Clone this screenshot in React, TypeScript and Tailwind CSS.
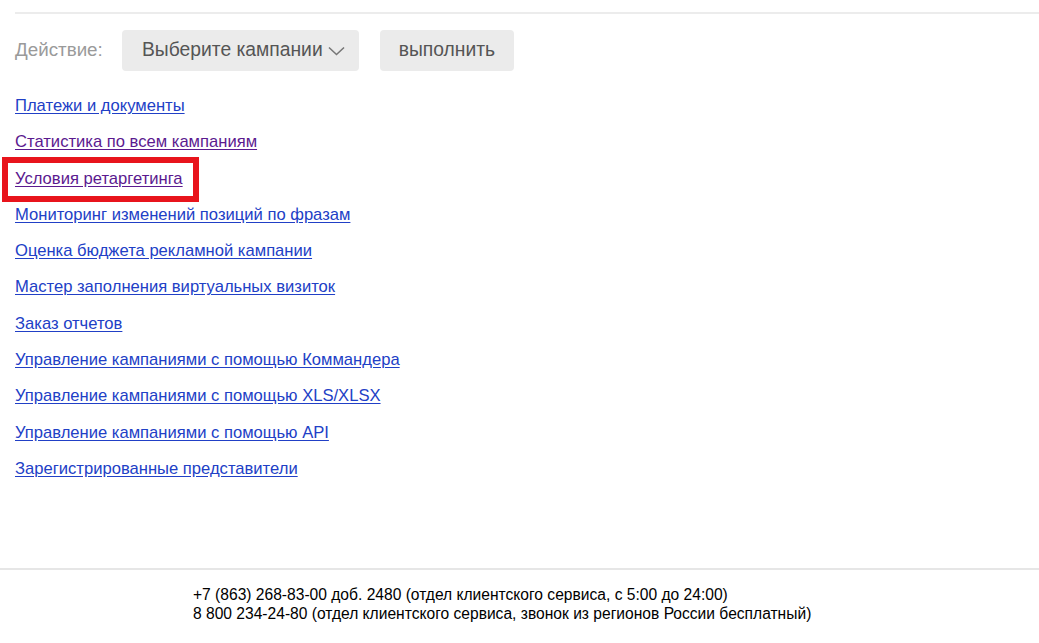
const links = [
  { text: "Платежи и документы", visited: false },
  { text: "Статистика по всем кампаниям", visited: true },
  { text: "Условия ретаргетинга", visited: true, marked: true },
  { text: "Мониторинг изменений позиций по фразам", visited: false },
  { text: "Оценка бюджета рекламной кампании", visited: false },
  { text: "Мастер заполнения виртуальных визиток", visited: false },
  { text: "Заказ отчетов", visited: false },
  { text: "Управление кампаниями с помощью Коммандера", visited: false },
  { text: "Управление кампаниями с помощью XLS/XLSX", visited: false },
  { text: "Управление кампаниями с помощью API", visited: false },
  { text: "Зарегистрированные представители", visited: false },
];

export default function App() {
  return (
    <div className="min-h-screen bg-white font-['Liberation_Sans',Arial,sans-serif]">
      <div className="pl-[15px] pt-[12px]">
        <div className="h-[2px] bg-[#ececec]" />

        <div className="mt-[16px] flex items-center">
          <span className="w-[107px] text-[18.8px] text-[#9a9a9a]">Действие:</span>
          <button className="flex h-[41px] items-center rounded-[4px] bg-[#ebebeb] pl-[20px] pr-[14px] text-[19.3px] text-[#555]">
            Выберите кампании
            <svg className="ml-[5px]" width="17" height="10" viewBox="0 0 17 10" fill="none">
              <polyline points="1,1.5 8.5,8.5 16,1.5" stroke="#777" strokeWidth="1.6" />
            </svg>
          </button>
          <button className="ml-[21px] h-[41px] rounded-[4px] bg-[#ebebeb] px-[19px] text-[19.3px] text-[#555]">
            выполнить
          </button>
        </div>

        <ul className="mt-[23px] flex flex-col">
          {links.map((l) => (
            <li key={l.text} className="h-[36.3px] text-[16.6px] leading-[24px]">
              <span className="relative inline-block">
                <a
                  href="#"
                  className={`underline underline-offset-[2px] ${
                    l.visited ? "text-[#5b1a8f]" : "text-[#2140c6]"
                  }`}
                >
                  {l.text}
                </a>
                {l.marked && (
                  <span className="pointer-events-none absolute left-[-13px] top-[-10px] h-[45px] w-[197px] border-[6px] border-[#e8141c]" />
                )}
              </span>
            </li>
          ))}
        </ul>
      </div>

      <footer className="mt-[75px] border-t-2 border-[#e6e6e6] pl-[193px] pt-[15px] text-[15.6px] leading-[19px] text-black">
        <div>+7 (863) 268-83-00 доб. 2480 (отдел клиентского сервиса, с 5:00 до 24:00)</div>
        <div>8 800 234-24-80 (отдел клиентского сервиса, звонок из регионов России бесплатный)</div>
      </footer>
    </div>
  );
}
